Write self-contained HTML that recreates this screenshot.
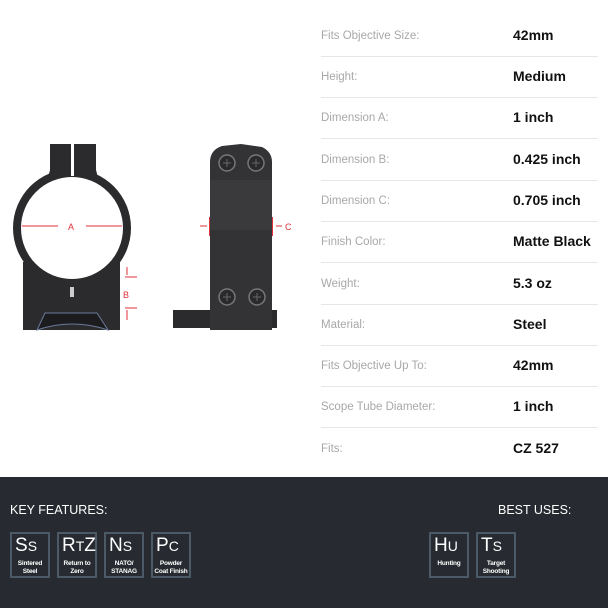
<!DOCTYPE html>
<html><head><style>
body{margin:0;width:608px;height:608px;background:#fff;font-family:"Liberation Sans",sans-serif;position:relative;overflow:hidden}
.l{position:absolute;left:321px;font-size:11.5px;color:#a8a8a8}
.v{position:absolute;left:513px;font-size:14px;color:#111;font-weight:bold}
.hr{position:absolute;left:321px;width:277px;height:1px;background:#e6e6e6}
.dark{position:absolute;left:0;top:477px;width:608px;height:131px;background:#272a30}
.h{position:absolute;top:503px;color:#fff;font-size:12.5px}
.b{position:absolute;top:532px;border:2px solid #4b5a66;box-sizing:border-box;width:40px;height:46px;color:#fff}
.b .s{position:absolute;left:3px;top:2px;font-size:19px;line-height:20px}
.b .s small{font-size:14px}
.b .t{position:absolute;left:-3px;right:-3px;top:26px;text-align:center;font-size:6.5px;font-weight:bold;line-height:8px;letter-spacing:-0.2px}
</style></head><body>
<svg width="300" height="340" style="position:absolute;left:0;top:0">
<g fill="#2b2b2d">
<rect x="50" y="144" width="46" height="34"/>
<path d="M50 170 Q48 180 40 186 L104 186 Q98 180 96 170Z"/>
<circle cx="72" cy="228" r="59"/>
<rect x="23" y="262" width="97" height="68"/>
</g>
<circle cx="72" cy="228" r="51" fill="#fff"/>
<rect x="71" y="144" width="3" height="32" fill="#fff"/>
<path d="M37 330 L45 313 L97 313 L108 330 Q72 318 37 330Z" fill="#1c1c1e" stroke="#6a7a9a" stroke-width="1"/>
<rect x="70" y="287" width="4" height="10" fill="#ccc"/>
<g stroke="#e0303a" fill="#e0303a" stroke-width="1">
<line x1="22" y1="226" x2="58" y2="226"/><line x1="86" y1="226" x2="122" y2="226"/>
<line x1="125" y1="277" x2="137" y2="277"/><line x1="125" y1="308" x2="137" y2="308"/>
<line x1="127" y1="267" x2="127" y2="275"/><line x1="127" y1="310" x2="127" y2="320"/>
<line x1="200" y1="226" x2="207" y2="226"/><line x1="276" y1="226" x2="282" y2="226"/>
<line x1="210" y1="217" x2="210" y2="236" stroke-width="2"/><line x1="272" y1="217" x2="272" y2="236" stroke-width="2"/>
</g>
<text x="68" y="230" font-size="9" fill="#e0303a">A</text>
<text x="123" y="298" font-size="9" fill="#e0303a">B</text>
<text x="285" y="230" font-size="9" fill="#e0303a">C</text>
<rect x="173" y="310" width="104" height="18" fill="#2b2b2d"/>
<path d="M210 162 Q210 150 222 146 L241 144 L262 147 Q272 152 272 162 L272 330 L210 330 Z" fill="#333336"/>
<rect x="210" y="180" width="62" height="50" fill="#3a3a3d"/>
<g fill="#2a2a2c" stroke="#777" stroke-width="1.5"><circle cx="227" cy="163" r="8"/><circle cx="256" cy="163" r="8"/><circle cx="227" cy="297" r="8"/><circle cx="257" cy="297" r="8"/></g>
<g stroke="#666" stroke-width="1"><path d="M223 163h8M227 159v8M252 163h8M256 159v8M223 297h8M227 293v8M253 297h8M257 293v8"/></g>
</svg>
<div class="l" style="top:30px">Fits Objective Size:</div><div class="v" style="top:27px">42mm</div><div class="hr" style="top:56px"></div>
<div class="l" style="top:71px">Height:</div><div class="v" style="top:68px">Medium</div><div class="hr" style="top:97px"></div>
<div class="l" style="top:112px">Dimension A:</div><div class="v" style="top:109px">1 inch</div><div class="hr" style="top:138px"></div>
<div class="l" style="top:154px">Dimension B:</div><div class="v" style="top:151px">0.425 inch</div><div class="hr" style="top:180px"></div>
<div class="l" style="top:195px">Dimension C:</div><div class="v" style="top:192px">0.705 inch</div><div class="hr" style="top:221px"></div>
<div class="l" style="top:236px">Finish Color:</div><div class="v" style="top:233px">Matte Black</div><div class="hr" style="top:262px"></div>
<div class="l" style="top:278px">Weight:</div><div class="v" style="top:275px">5.3 oz</div><div class="hr" style="top:304px"></div>
<div class="l" style="top:319px">Material:</div><div class="v" style="top:316px">Steel</div><div class="hr" style="top:345px"></div>
<div class="l" style="top:360px">Fits Objective Up To:</div><div class="v" style="top:357px">42mm</div><div class="hr" style="top:386px"></div>
<div class="l" style="top:401px">Scope Tube Diameter:</div><div class="v" style="top:398px">1 inch</div><div class="hr" style="top:427px"></div>
<div class="l" style="top:443px">Fits:</div><div class="v" style="top:440px">CZ 527</div>
<div class="dark"></div>
<div class="h" style="left:10px">KEY FEATURES:</div>
<div class="h" style="left:498px">BEST USES:</div>
<div class="b" style="left:10px"><div class="s">S<small>S</small></div><div class="t">Sintered<br>Steel</div></div>
<div class="b" style="left:57px"><div class="s">R<small>T</small>Z</div><div class="t">Return to<br>Zero</div></div>
<div class="b" style="left:104px"><div class="s">N<small>S</small></div><div class="t">NATO/<br>STANAG</div></div>
<div class="b" style="left:151px"><div class="s">P<small>C</small></div><div class="t">Powder<br><span style="white-space:nowrap">Coat Finish</span></div></div>
<div class="b" style="left:429px"><div class="s">H<small>U</small></div><div class="t">Hunting</div></div>
<div class="b" style="left:476px"><div class="s">T<small>S</small></div><div class="t">Target<br>Shooting</div></div>
</body></html>
